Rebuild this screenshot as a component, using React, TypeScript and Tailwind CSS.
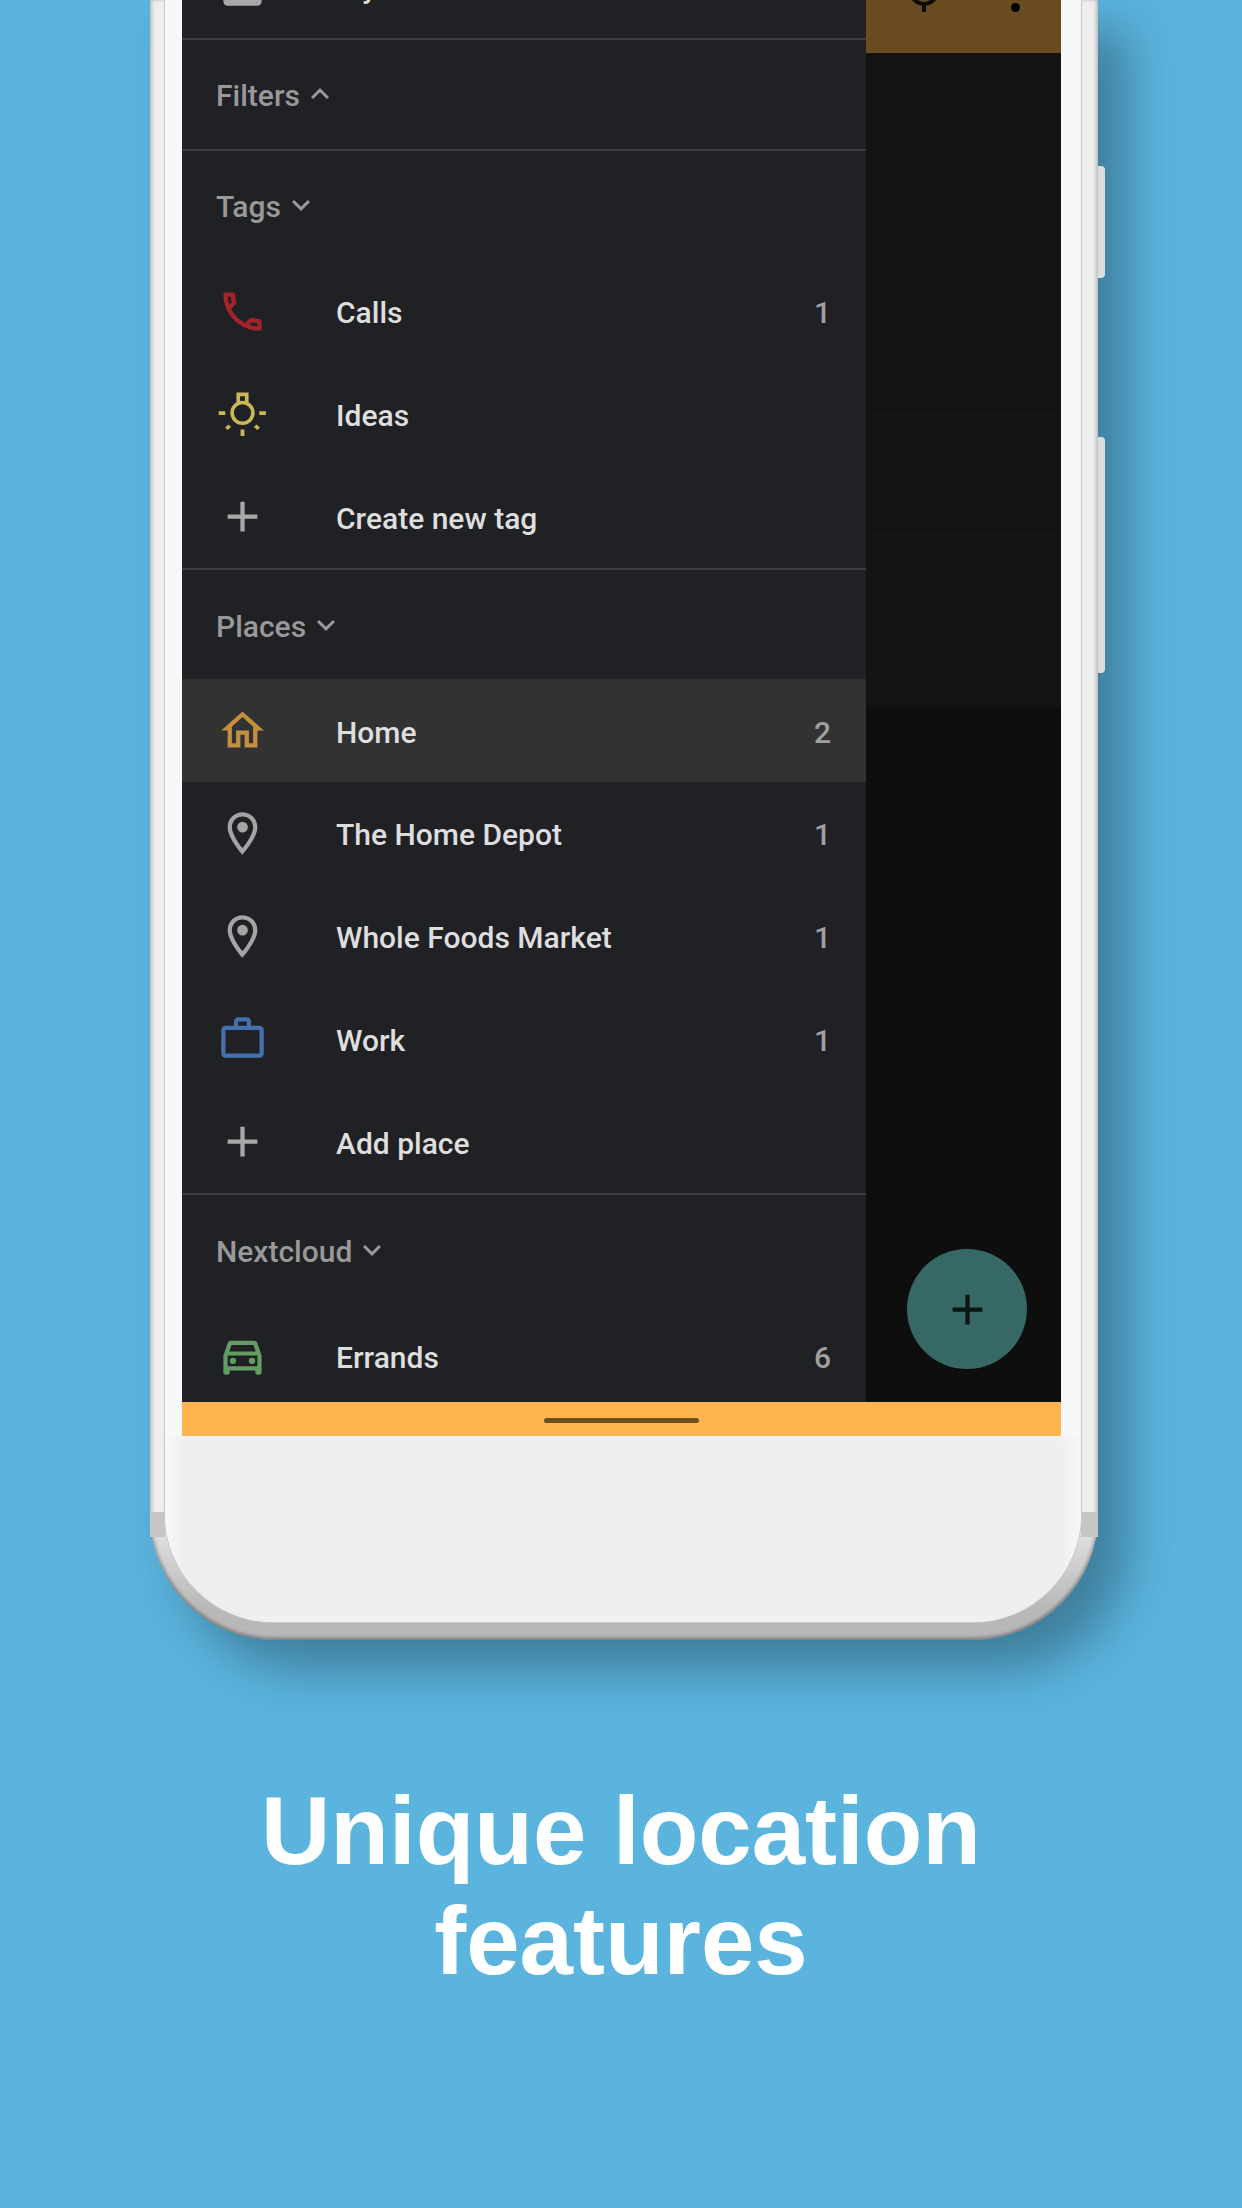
const Icon = ({ d, color, size = 51, children }: { d?: string; color: string; size?: number; children?: React.ReactNode }) => (
  <svg width={size} height={size} viewBox="0 0 24 24" fill={color} className="shrink-0">
    {d && <path d={d} fillRule="evenodd" />}
    {children}
  </svg>
);

const PHONE =
  "M6.54 5c.06.89.21 1.76.45 2.59l-1.2 1.2c-.41-1.2-.67-2.47-.76-3.79h1.51m9.86 12.02c.85.24 1.72.39 2.6.45v1.49c-1.32-.09-2.59-.35-3.8-.75l1.2-1.19M7.5 3H4c-.55 0-1 .45-1 1 0 9.39 7.61 17 17 17 .55 0 1-.45 1-1v-3.49c0-.55-.45-1-1-1-1.24 0-2.45-.2-3.57-.57-.1-.04-.21-.05-.31-.05-.26 0-.51.1-.71.29l-2.2 2.2c-2.83-1.45-5.15-3.76-6.59-6.59l2.2-2.2c.28-.28.36-.67.25-1.02C8.7 6.45 8.5 5.25 8.5 4c0-.55-.45-1-1-1z";
const PLUS = "M19 13h-6v6h-2v-6H5v-2h6V5h2v6h6v2z";
const HOME = "M12 5.69l5 4.5V18h-2v-6H9v6H7v-7.81l5-4.5M12 3L2 12h3v8h6v-6h2v6h6v-8h3L12 3z";
const PLACE =
  "M12 2C8.13 2 5 5.13 5 9c0 5.25 7 13 7 13s7-7.75 7-13c0-3.87-3.13-7-7-7zM7 9c0-2.76 2.24-5 5-5s5 2.24 5 5c0 2.88-2.88 7.19-5 9.88C9.92 16.21 7 11.85 7 9z";
const WORK =
  "M14 6V4h-4v2h4zM4 8v11h16V8H4zm16-2c1.11 0 2 .89 2 2v11c0 1.11-.89 2-2 2H4c-1.11 0-2-.89-2-2l.01-11c0-1.11.88-2 1.99-2h4V4c0-1.11.89-2 2-2h4c1.11 0 2 .89 2 2v2h4z";
const CAR =
  "M18.92 6.01C18.72 5.42 18.16 5 17.5 5h-11c-.66 0-1.21.42-1.42 1.01L3 12v8c0 .55.45 1 1 1h1c.55 0 1-.45 1-1v-1h12v1c0 .55.45 1 1 1h1c.55 0 1-.45 1-1v-8l-2.08-5.99zM6.85 7h10.29l1.08 3.11H5.77L6.85 7zM19 17H5v-5h14v5z";

const Bulb = () => (
  <Icon color="#c9b858">
    <circle cx="12" cy="11.7" r="4.9" fill="none" stroke="#c9b858" strokeWidth="1.7" />
    <path d="M10 7.3V3h4v4.3" fill="none" stroke="#c9b858" strokeWidth="1.7" />
    <path d="M.8 10.9h3.1v1.8H.8zM19.9 10.9H23v1.8h-3.1zM11.1 19.5h1.8v3.1h-1.8z" />
    <path d="M5.4 17.2l1.2 1.2-1.6 1.4-1.2-1.2zM18.6 17.2l1.6 1.4-1.2 1.2-1.6-1.4z" />
  </Icon>
);

const Row = ({ icon, label, count, active }: { icon: React.ReactNode; label: string; count?: number; active?: boolean }) => (
  <div className={`flex h-[102.8px] items-center pl-[35px] pr-[35px] ${active ? "bg-[#323232]" : ""}`}>
    <div className="w-[119px]">{icon}</div>
    <span className="flex-1 pt-[3px] text-[30px] font-medium text-[#dedede]">{label}</span>
    {count !== undefined && <span className="pt-[3px] text-[30px] font-medium text-[#a0a0a0]">{count}</span>}
  </div>
);

const Header = ({ label, open }: { label: string; open?: boolean }) => (
  <div className="flex h-[111px] items-center border-t-2 border-[#3c3d41] pl-[34px] text-[30px] font-medium text-[#999999]">
    <span className="pt-[3px]">{label}</span>
    <svg width="36" height="36" viewBox="0 0 24 24" fill="#999999" className="ml-[2px]">
      <path d={open ? "M12 8l-6 6 1.41 1.41L12 10.83l4.59 4.58L18 14z" : "M16.59 8.59L12 13.17 7.41 8.59 6 10l6 6 6-6z"} />
    </svg>
  </div>
);

export default function App() {
  return (
    <div className="h-[2208px] overflow-hidden bg-[#5ab4de] font-['Roboto',sans-serif]">
      <div className="relative ml-[150px] h-[1640px] w-[948px]">
        {/* phone body */}
        <div className="h-full rounded-b-[125px] bg-gradient-to-b from-[#eeeeee] from-[92%] to-[#b8b8b8] to-[98%] pb-[18px] pl-[15px] pr-[17px] shadow-[30px_30px_50px_rgba(0,0,0,0.3),inset_3px_0_3px_rgba(0,0,0,0.12),inset_-3px_0_3px_rgba(0,0,0,0.12),inset_0_-3px_3px_rgba(0,0,0,0.2)]">
          <div className="flex h-full flex-col overflow-hidden rounded-b-[108px] bg-[#f8f8f8] shadow-[0_0_0_1px_#c8c8c8]">
            <div className="pl-[17px] pr-[20px]">
              <div className="flex h-[1402px] bg-[#0e0e0e]">
                {/* drawer */}
                <div className="w-[684px] overflow-hidden bg-[#202125]">
                  <div className="mt-[-65px]">
                    <Row
                      label="My lists"
                      icon={
                        <Icon color="#a8a8a8">
                          <path d="M3 5h7.5v2.4h3V5H21v14c0 1.1-.9 2-2 2H5c-1.1 0-2-.9-2-2z" />
                        </Icon>
                      }
                    />
                  </div>
                  <Header label="Filters" open />
                  <Header label="Tags" />
                  <Row label="Calls" count={1} icon={<Icon d={PHONE} color="#a3232b" />} />
                  <Row label="Ideas" icon={<Bulb />} />
                  <Row label="Create new tag" icon={<Icon d={PLUS} color="#a8a8a8" />} />
                  <Header label="Places" />
                  <Row active label="Home" count={2} icon={<Icon d={HOME} color="#c4903f" />} />
                  <Row
                    label="The Home Depot"
                    count={1}
                    icon={
                      <Icon d={PLACE} color="#a4a4a4">
                        <circle cx="12" cy="9" r="2.5" />
                      </Icon>
                    }
                  />
                  <Row
                    label="Whole Foods Market"
                    count={1}
                    icon={
                      <Icon d={PLACE} color="#a4a4a4">
                        <circle cx="12" cy="9" r="2.5" />
                      </Icon>
                    }
                  />
                  <Row label="Work" count={1} icon={<Icon d={WORK} color="#4570ad" />} />
                  <Row label="Add place" icon={<Icon d={PLUS} color="#a8a8a8" />} />
                  <Header label="Nextcloud" />
                  <Row
                    label="Errands"
                    count={6}
                    icon={
                      <Icon d={CAR} color="#649c66">
                        <circle cx="7.5" cy="14.5" r="1.5" />
                        <circle cx="16.5" cy="14.5" r="1.5" />
                      </Icon>
                    }
                  />
                </div>

                {/* list behind the scrim */}
                <div className="relative flex flex-1 flex-col overflow-hidden">
                  <div className="flex h-[53px] items-start bg-[#684c20]">
                    <svg width="30" height="14" viewBox="0 0 30 14" className="ml-[43px]">
                      <path d="M2 -9a13 13 0 0 0 26 0" fill="none" stroke="#0e0b05" strokeWidth="4" />
                      <path d="M13 4h4v8h-4z" fill="#0e0b05" />
                    </svg>
                    <div className="ml-[72px] mt-[3px] h-[9px] w-[9px] rounded-full bg-black" />
                  </div>
                  <div className="h-[179px] border-b border-[#101010] bg-[#141414]" />
                  <div className="h-[178px] border-b border-[#0e0e0e] bg-[#141414]" />
                  <div className="h-[120px] border-b border-[#0e0e0e] bg-[#141414]" />
                  <div className="h-[177px] bg-[#141414]" />
                  <div className="flex-1 bg-[#0e0e0e]" />
                  <div className="absolute left-[41px] top-[1249px] flex h-[120px] w-[120px] items-center justify-center rounded-full bg-[#366966]">
                    <svg width="51" height="51" viewBox="0 0 24 24" fill="#0b1513">
                      <path d={PLUS} />
                    </svg>
                  </div>
                </div>
              </div>

              {/* nav bar */}
              <div className="flex h-[34px] items-center justify-center bg-[#ffb54f]">
                <div className="mt-[2px] h-[5px] w-[155px] rounded-full bg-[#6e4f1e]" />
              </div>
            </div>
            <div className="flex-1 bg-[#eeeeee] shadow-[inset_16px_0_16px_-6px_#f8f8f8,inset_-16px_0_16px_-6px_#f8f8f8]" />
          </div>
        </div>

        {/* side buttons */}
        <div className="absolute left-[948px] top-[166px] h-[112px] w-[7px] rounded-r-[4px] bg-[#dcdcdc]" />
        <div className="absolute left-[948px] top-[437px] h-[236px] w-[7px] rounded-r-[4px] bg-[#dcdcdc]" />
        {/* antenna bands */}
        <div className="absolute left-0 top-[1512px] h-[25px] w-[15px] bg-[#c6c6c6]" />
        <div className="absolute right-0 top-[1512px] h-[25px] w-[17px] bg-[#c6c6c6]" />
      </div>

      <h1 className="mt-[136px] text-center font-['Liberation_Sans',sans-serif] text-[96px] font-bold leading-[110px] text-white">
        Unique location
        <br />
        features
      </h1>
    </div>
  );
}
